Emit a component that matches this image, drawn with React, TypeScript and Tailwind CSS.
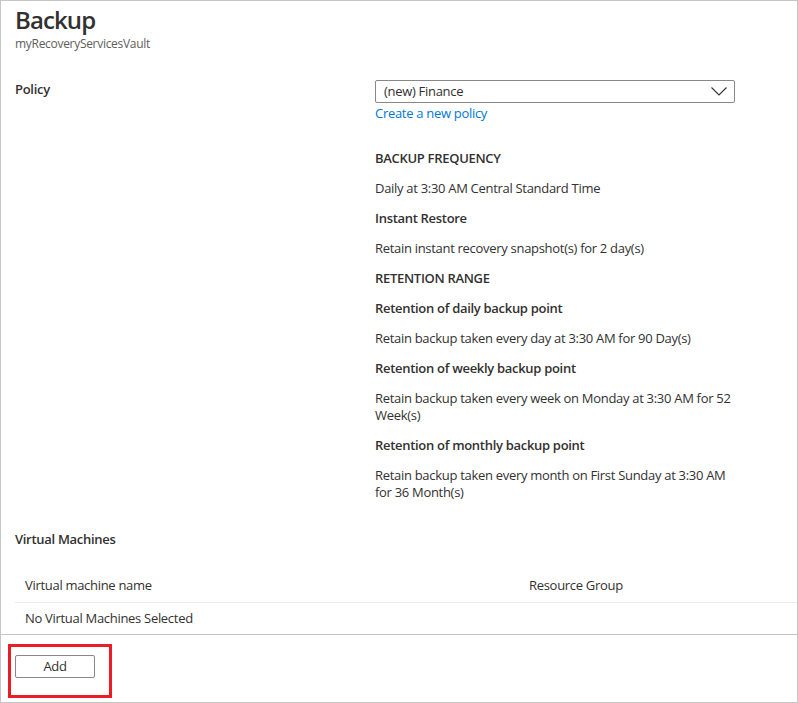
import React from "react";

const font = { fontFamily: '"Open Sans", "Noto Sans", sans-serif' };

function Item({ bold, children }: { bold?: boolean; children: React.ReactNode }) {
  return (
    <div className={bold ? "font-semibold text-[#323130]" : "text-[#323130]"}>{children}</div>
  );
}

export default function App() {
  return (
    <div
      className="relative w-[798px] h-[703px] bg-white border border-[#c6c6c6] flex flex-col text-[13px] leading-[17px] tracking-[-0.3px] text-[#323130] overflow-hidden"
      style={font}
    >
      {/* Header */}
      <div className="px-[14px] pt-[3px]">
        <h1 className="text-[24px] leading-[32px] font-semibold tracking-[-0.9px] text-[#323130]">Backup</h1>
        <div className="text-[12px] leading-[16px] tracking-[-0.3px] text-[#605e5c]">myRecoveryServicesVault</div>
      </div>

      {/* Policy */}
      <div className="flex px-[14px] mt-[28px]">
        <div className="w-[360px] font-semibold pt-[1px]">Policy</div>
        <div className="w-[360px] flex flex-col">
          <div className="h-[23px] border border-[#8a8886] rounded-[2px] flex items-center justify-between pl-[8px] pr-[7px]">
            <span>(new) Finance</span>
            <svg width="16" height="9" viewBox="0 0 16 9" fill="none">
              <path d="M0.5 0.5 L8 8 L15.5 0.5" stroke="#323130" strokeWidth="1.1" />
            </svg>
          </div>
          <a className="text-[#0078d4] mt-[2px]">Create a new policy</a>
          <div className="flex flex-col gap-[13px] mt-[28px]">
            <Item bold>BACKUP FREQUENCY</Item>
            <Item>Daily at 3:30 AM Central Standard Time</Item>
            <Item bold>Instant Restore</Item>
            <Item>Retain instant recovery snapshot(s) for 2 day(s)</Item>
            <Item bold>RETENTION RANGE</Item>
            <Item bold>Retention of daily backup point</Item>
            <Item>Retain backup taken every day at 3:30 AM for 90 Day(s)</Item>
            <Item bold>Retention of weekly backup point</Item>
            <Item>
              <span className="whitespace-nowrap">Retain backup taken every week on Monday at 3:30 AM for 52</span>
              <br />
              Week(s)
            </Item>
            <Item bold>Retention of monthly backup point</Item>
            <Item>
              <span className="whitespace-nowrap">Retain backup taken every month on First Sunday at 3:30 AM</span>
              <br />
              for 36 Month(s)
            </Item>
          </div>
        </div>
      </div>

      {/* Virtual machines */}
      <div className="px-[14px] mt-[30px] font-semibold">Virtual Machines</div>
      <div className="ml-[14px] mt-[21px]">
        <div className="flex h-[34px] items-center border-b border-[#edebe9]">
          <div className="w-[514px] pl-[10px]">Virtual machine name</div>
          <div>Resource Group</div>
        </div>
        <div className="flex h-[31px] items-center">
          <div className="pl-[10px]">No Virtual Machines Selected</div>
        </div>
      </div>

      {/* Footer */}
      <div className="flex-1 border-t border-[#c8c6c4] px-[14px] pt-[20px]">
        <button className="w-[80px] h-[23px] border border-[#8a8886] rounded-[2px] bg-white text-[13px] text-[#323130] flex items-center justify-center">
          Add
        </button>
      </div>

      {/* Red highlight annotation */}
      <div className="absolute left-[7px] top-[643px] w-[104px] h-[54px] border-[3px] border-[#ed1c24]" />
    </div>
  );
}
